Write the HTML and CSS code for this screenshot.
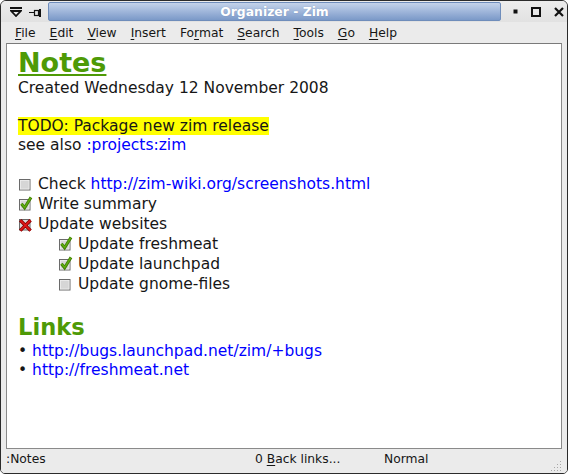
FILE: index.html
```html
<!DOCTYPE html>
<html>
<head>
<meta charset="utf-8">
<link rel="stylesheet" href="styles.css">
</head>
<body>
<div class="window">
  <div class="titlebar">
    <div class="tb-left">
      <svg class="ico-menu" width="12" height="10" viewBox="0 0 12 10"><rect x="0" y="0" width="12" height="2" fill="#111"/><path d="M1.2 4 H10.8 L6 9 Z" fill="none" stroke="#111" stroke-width="1.8" stroke-linejoin="miter"/></svg>
      <svg class="ico-pin" width="12" height="8" viewBox="0 0 12 8"><path d="M0 3.5 H5" stroke="#111" stroke-width="1"/><rect x="5.5" y="1.5" width="4" height="5" fill="none" stroke="#111" stroke-width="1.2"/><rect x="10" y="0" width="2" height="8" fill="#111"/></svg>
    </div>
    <div class="title">Organizer - Zim</div>
    <div class="tb-right">
      <svg width="5" height="5" viewBox="0 0 5 5"><rect x="0.5" y="0.5" width="4" height="4" fill="#111"/></svg>
      <svg width="10" height="10" viewBox="0 0 10 10"><rect x="1" y="1" width="8" height="8" fill="none" stroke="#111" stroke-width="2"/></svg>
      <svg width="10" height="10" viewBox="0 0 10 10"><path d="M1 1 L9 9 M9 1 L1 9" stroke="#111" stroke-width="2.2"/></svg>
    </div>
  </div>
  <div class="menubar">
    <span class="mi"><u>F</u>ile</span>
    <span class="mi"><u>E</u>dit</span>
    <span class="mi"><u>V</u>iew</span>
    <span class="mi"><u>I</u>nsert</span>
    <span class="mi">Fo<u>r</u>mat</span>
    <span class="mi"><u>S</u>earch</span>
    <span class="mi"><u>T</u>ools</span>
    <span class="mi"><u>G</u>o</span>
    <span class="mi"><u>H</u>elp</span>
  </div>
  <div class="editor">
    <div class="h1">Notes</div>
    <div class="line">Created Wednesday 12 November 2008</div>
    <div class="line"></div>
    <div class="line"><span class="hl">TODO: Package new zim release</span></div>
    <div class="line">see also <span class="link">:projects:zim</span></div>
    <div class="line"></div>
    <div class="cb">
      <svg class="box" width="16" height="16" viewBox="0 0 16 16"><rect x="1.5" y="3.5" width="10.5" height="10.5" fill="#d6d6d6" stroke="#6a6a6a"/><rect x="2.5" y="4.5" width="8.5" height="8.5" fill="none" stroke="#eeeeee" stroke-width="0.8"/></svg>
      <span>Check <span class="link">http://zim-wiki.org/screenshots.html</span></span>
    </div>
    <div class="cb">
      <svg class="box" width="16" height="16" viewBox="0 0 16 16"><rect x="1.5" y="3.5" width="10.5" height="10.5" fill="#d6d6d6" stroke="#6a6a6a"/><rect x="2.5" y="4.5" width="8.5" height="8.5" fill="none" stroke="#eeeeee" stroke-width="0.8"/><path d="M3.4 7.8 L6.6 11.8 L13 1.4" fill="none" stroke="#3f7d05" stroke-width="3"/><path d="M3.6 7.8 L6.6 11.5 L12.8 1.6" fill="none" stroke="#5fae10" stroke-width="1.4"/></svg>
      <span>Write summary</span>
    </div>
    <div class="cb">
      <svg class="box" width="16" height="16" viewBox="0 0 16 16"><rect x="1.5" y="3.5" width="10.5" height="10.5" fill="#d6d6d6" stroke="#6a6a6a"/><path d="M2.2 4.2 L12.6 14.6 M12.6 4.2 L2.2 14.6" fill="none" stroke="#8a0000" stroke-width="3.4"/><path d="M2.4 4.4 L12.4 14.4 M12.4 4.4 L2.4 14.4" fill="none" stroke="#e01818" stroke-width="1.6"/></svg>
      <span>Update websites</span>
    </div>
    <div class="cb sub">
      <svg class="box" width="16" height="16" viewBox="0 0 16 16"><rect x="1.5" y="3.5" width="10.5" height="10.5" fill="#d6d6d6" stroke="#6a6a6a"/><rect x="2.5" y="4.5" width="8.5" height="8.5" fill="none" stroke="#eeeeee" stroke-width="0.8"/><path d="M3.4 7.8 L6.6 11.8 L13 1.4" fill="none" stroke="#3f7d05" stroke-width="3"/><path d="M3.6 7.8 L6.6 11.5 L12.8 1.6" fill="none" stroke="#5fae10" stroke-width="1.4"/></svg>
      <span>Update freshmeat</span>
    </div>
    <div class="cb sub">
      <svg class="box" width="16" height="16" viewBox="0 0 16 16"><rect x="1.5" y="3.5" width="10.5" height="10.5" fill="#d6d6d6" stroke="#6a6a6a"/><rect x="2.5" y="4.5" width="8.5" height="8.5" fill="none" stroke="#eeeeee" stroke-width="0.8"/><path d="M3.4 7.8 L6.6 11.8 L13 1.4" fill="none" stroke="#3f7d05" stroke-width="3"/><path d="M3.6 7.8 L6.6 11.5 L12.8 1.6" fill="none" stroke="#5fae10" stroke-width="1.4"/></svg>
      <span>Update launchpad</span>
    </div>
    <div class="cb sub">
      <svg class="box" width="16" height="16" viewBox="0 0 16 16"><rect x="1.5" y="3.5" width="10.5" height="10.5" fill="#d6d6d6" stroke="#6a6a6a"/><rect x="2.5" y="4.5" width="8.5" height="8.5" fill="none" stroke="#eeeeee" stroke-width="0.8"/></svg>
      <span>Update gnome-files</span>
    </div>
    <div class="line"></div>
    <div class="h2">Links</div>
    <div class="line">• <span class="link">http://bugs.launchpad.net/zim/+bugs</span></div>
    <div class="line">• <span class="link">http://freshmeat.net</span></div>
  </div>
  <div class="statusbar">
    <span class="sb-page">:Notes</span>
    <span class="sb-back">0 <u>B</u>ack links...</span>
    <span class="sb-mode">Normal</span>
    <svg class="grip" width="12" height="12" viewBox="0 0 12 12">
      <g fill="#a8a8a8">
        <rect x="10" y="2" width="1" height="1"/>
        <rect x="7" y="5" width="1" height="1"/><rect x="10" y="5" width="1" height="1"/>
        <rect x="4" y="8" width="1" height="1"/><rect x="7" y="8" width="1" height="1"/><rect x="10" y="8" width="1" height="1"/>
        <rect x="1" y="11" width="1" height="1"/><rect x="4" y="11" width="1" height="1"/><rect x="7" y="11" width="1" height="1"/><rect x="10" y="11" width="1" height="1"/>
      </g>
    </svg>
  </div>
</div>
</body>
</html>
```

FILE: styles.css
```css
html, body {
  margin: 0;
  padding: 0;
  background: #ffffff;
}

body {
  font-family: "DejaVu Sans", "Bitstream Vera Sans", sans-serif;
  color: #161616;
}

.window {
  width: 566px;
  height: 472px;
  border: 1px solid #2b2b2b;
  border-radius: 6px 6px 5px 5px;
  background: #ebebeb;
  display: flex;
  flex-direction: column;
  overflow: hidden;
}

/* title bar */
.titlebar {
  height: 21px;
  flex: none;
  display: flex;
  background: linear-gradient(#ececec, #e2e2e2);
}

.tb-left {
  width: 47px;
  flex: none;
  display: flex;
  align-items: center;
  box-sizing: border-box;
  padding-left: 9px;
  gap: 7px;
}

.ico-pin { margin-top: 2px; }

.title {
  flex: 1;
  margin: 1px 0 1px;
  border: 1px solid #6f8dbb;
  border-radius: 2px;
  background: linear-gradient(#c4d3ea, #a3b9dc 45%, #7b99c8);
  color: #ffffff;
  font-weight: bold;
  font-size: 12.4px;
  display: flex;
  align-items: center;
  justify-content: center;
  text-shadow: 0 0 1px rgba(60, 80, 120, 0.35);
}

.tb-right {
  width: 66px;
  flex: none;
  display: flex;
  align-items: center;
  box-sizing: border-box;
  padding-left: 12px;
  gap: 13px;
}

/* menu bar */
.menubar {
  height: 21px;
  flex: none;
  display: flex;
  align-items: center;
  padding-left: 7px;
  font-size: 12.3px;
  background: #ebebeb;
}

.mi {
  padding: 0 7px;
}

.mi u {
  text-underline-offset: 2px;
}

/* editor */
.editor {
  flex: none;
  height: 406px;
  margin: 0 5px;
  box-sizing: border-box;
  border: 1px solid #8a8a8a;
  border-top-color: #7a7a7a;
  background: #ffffff;
  padding: 3px 0 0 11px;
  font-size: 15.5px;
}

.h1 {
  font-size: 27px;
  line-height: 32px;
  font-weight: bold;
  color: #4e9a06;
  text-decoration: underline;
  text-underline-offset: 2px;
  text-decoration-thickness: 2px;
}

.h2 {
  font-size: 22.6px;
  line-height: 29px;
  font-weight: bold;
  color: #4e9a06;
}

.line {
  height: 19px;
  line-height: 19px;
  white-space: nowrap;
}

.hl {
  background: #ffff00;
}

.link {
  color: #0000ff;
}

.cb {
  height: 20px;
  display: flex;
  align-items: center;
  white-space: nowrap;
}

.cb .box {
  flex: none;
  margin-right: 4px;
}

.cb.sub {
  padding-left: 40px;
}

/* status bar */
.statusbar {
  flex: 1;
  display: flex;
  align-items: center;
  padding: 0 0 4px 5px;
  font-size: 12.3px;
  background: #ebebeb;
  position: relative;
}

.sb-page { width: 249px; }
.sb-back { width: 129px; }
.sb-back u { text-underline-offset: 2px; }
.sb-mode { flex: 1; }

.grip {
  position: absolute;
  right: 5px;
  bottom: 2px;
}
```
